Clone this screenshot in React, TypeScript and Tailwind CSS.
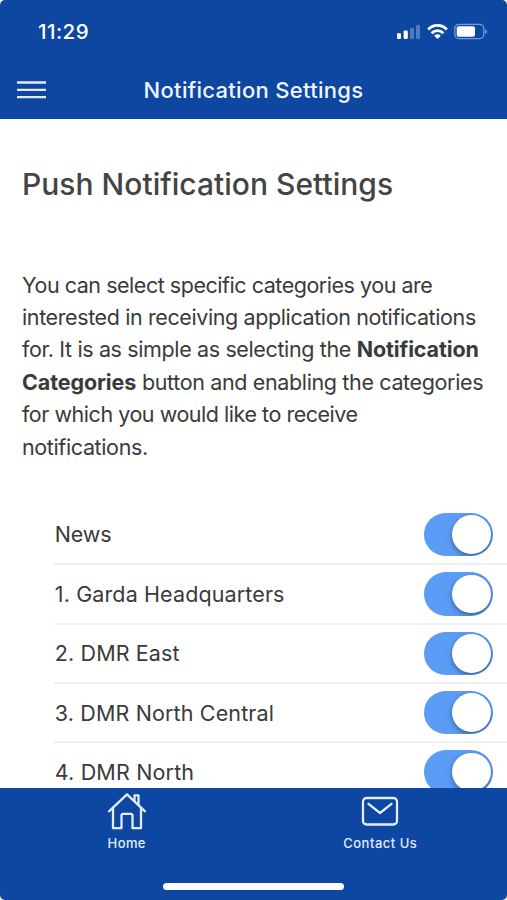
const categories = [
  { label: 'News', spacing: 'tracking-[-0.2px]' },
  { label: '1. Garda Headquarters', spacing: 'tracking-[0.12px]' },
  { label: '2. DMR East', spacing: 'tracking-[0.12px]' },
  { label: '3. DMR North Central', spacing: 'tracking-[0.14px]' },
  { label: '4. DMR North', spacing: 'tracking-[0.16px]' },
];

function StatusBar() {
  return (
    <div className="flex h-[60px] items-start justify-between pr-[19px] pl-[38px] pt-[20px] text-white">
      <span className="text-[20.5px] leading-[24px] font-medium tracking-[0.45px]">11:29</span>
      <div className="flex items-center pt-[3px]">
        <svg width="24" height="17" viewBox="0 0 24 17" fill="currentColor">
          <rect x="1" y="10.2" width="4" height="5.8" rx="1.2" />
          <rect x="7.6" y="7.6" width="4.2" height="8.4" rx="1.2" />
          <rect x="14" y="4.8" width="4" height="11.2" rx="1.2" opacity="0.28" />
          <rect x="20" y="2" width="4" height="14" rx="1.2" opacity="0.28" />
        </svg>
        <svg className="ml-[7px]" width="21" height="17" viewBox="0 0 22 17" fill="none" stroke="currentColor" strokeWidth="2.9">
          <path d="M1.2 6.4C6.7 0.8 15.3 0.8 20.8 6.4" />
          <path d="M4.8 10.3C8.3 6.7 13.7 6.7 17.2 10.3" />
          <path d="M11 16.4L7.5 12.9C9.6 10.9 12.4 10.9 14.5 12.9Z" fill="currentColor" stroke="none" />
        </svg>
        <svg className="ml-[6px]" width="34" height="17" viewBox="0 0 34 17" fill="none">
          <rect x="0.8" y="1.4" width="29" height="14.2" rx="4.2" stroke="white" strokeOpacity="0.45" strokeWidth="1.3" />
          <rect x="2.7" y="3.2" width="18.3" height="10.6" rx="2" fill="white" />
          <path d="M31.3 6.2C33.4 7 33.4 10.2 31.3 11Z" fill="white" fillOpacity="0.5" />
        </svg>
      </div>
    </div>
  );
}

function Toggle() {
  return (
    <span className="flex h-[43.5px] w-[69px] shrink-0 items-center justify-end overflow-hidden rounded-full bg-[#5b9cf6] pr-[2.5px]">
      <span className="size-[38.5px] rounded-full bg-white shadow-[0_2px_5px_rgba(0,0,0,0.4)]" />
    </span>
  );
}

export default function App() {
  return (
    <div className="h-[900px] w-[507px] overflow-hidden bg-white font-['Inter','Liberation_Sans',sans-serif] text-[#3a3a3a]">
      <div className="flex h-full flex-col overflow-hidden rounded-t-[5px] rounded-b-[5px]">
        <header className="h-[119.4px] shrink-0 bg-[#0d47a1]">
          <StatusBar />
          <div className="relative flex h-[60px] items-center justify-center text-white">
            <svg className="absolute left-[17px] top-[20px]" width="29" height="20" viewBox="0 0 29 20" stroke="#e3ebf7" strokeWidth="2.3">
              <path d="M0 2.5H29M0 9.8H29M0 17.2H29" />
            </svg>
            <h1 className="text-[22px] font-medium tracking-[0.3px] whitespace-nowrap text-[#f0f5fc]">Notification Settings</h1>
          </div>
        </header>

        <main className="min-h-0 flex-1 overflow-hidden">
          <h2 className="mt-[44.6px] ml-[22px] text-[30px] leading-[40px] font-medium tracking-[0.02px] whitespace-nowrap text-[#444]">
            Push Notification Settings
          </h2>
          <p className="mt-[64.8px] ml-[22px] text-[21.5px] leading-[32.35px] whitespace-nowrap">
            <span className="block tracking-[-0.47px]">You can select specific categories you are</span>
            <span className="block tracking-[-0.39px]">interested in receiving application notifications</span>
            <span className="block tracking-[-0.37px]">for. It is as simple as selecting the <b className="tracking-[-0.1px]">Notification</b></span>
            <span className="block tracking-[-0.36px]"><b className="tracking-[-0.1px]">Categories</b> button and enabling the categories</span>
            <span className="block tracking-[-0.47px]">for which you would like to receive</span>
            <span className="block tracking-[-0.37px]">notifications.</span>
          </p>
          <ul className="mt-[43px] ml-[54px]">
            {categories.map((c) => (
              <li key={c.label} className="flex h-[59.4px] items-center justify-between border-b-2 border-[#efefef] pr-[14px] pl-[0.8px] text-[21.5px] whitespace-nowrap">
                <span className={c.spacing}>{c.label}</span>
                <Toggle />
              </li>
            ))}
          </ul>
        </main>

        <footer className="flex h-[112px] shrink-0 flex-col items-center justify-between bg-[#0d47a1] pb-[10.5px] text-[#e3edfa]">
          <nav className="grid w-full grid-cols-2 text-center text-[13px] leading-[16px] font-medium">
            <a className="flex flex-col items-center pt-[3px]">
              <svg width="40" height="40" viewBox="0 0 40 40" fill="none" stroke="currentColor" strokeWidth="2.3" strokeLinecap="round" strokeLinejoin="round">
                <path d="M2 20.3L20 3.3L38 20.3" />
                <path d="M6 17V37.2H14.5V24.5Q14.5 22.8 16.2 22.8H23.8Q25.5 22.8 25.5 24.5V37.2H34V17" />
                <path d="M27.5 9.8V4.3H31.5V13.5" />
              </svg>
              <span className="mt-[4px] tracking-[0.4px]">Home</span>
            </a>
            <a className="flex flex-col items-center pt-[3px]">
              <svg width="40" height="40" viewBox="0 0 40 40" fill="none" stroke="currentColor" strokeWidth="2.3" strokeLinecap="round" strokeLinejoin="round">
                <rect x="3" y="7" width="34" height="26.5" rx="3.5" />
                <path d="M8.5 12.8L20 22L31.5 12.8" />
              </svg>
              <span className="mt-[4px] tracking-[0.5px]">Contact Us</span>
            </a>
          </nav>
          <div className="h-[7px] w-[181px] rounded-full bg-white" />
        </footer>
      </div>
    </div>
  );
}
